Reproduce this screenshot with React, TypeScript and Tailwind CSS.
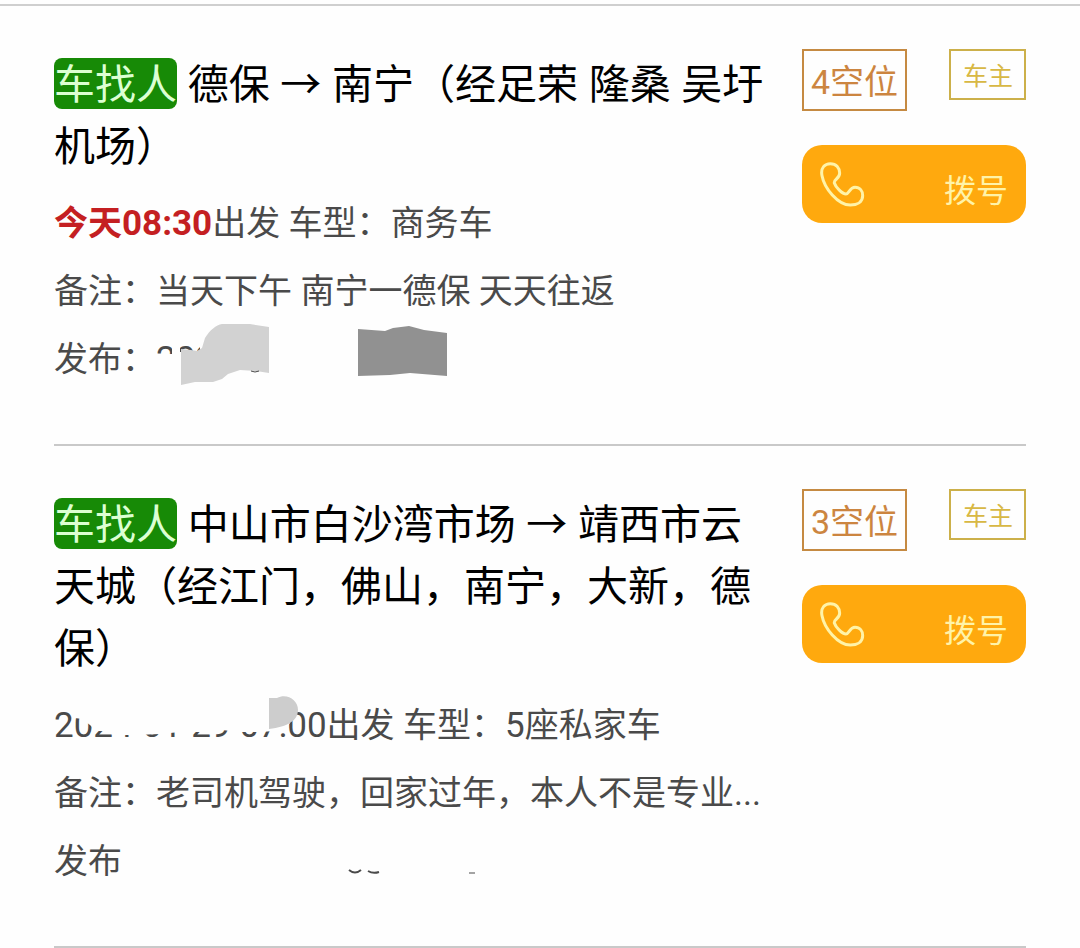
import type { ReactNode } from "react";

type Ride = {
  id: string;
  route: string;
  seats: number;
  departure: ReactNode;
  vehicle: ReactNode;
  note: string;
  publisher: ReactNode;
};

function PhoneIcon() {
  return (
    <svg
      viewBox="117 396 135 135"
      className="size-[45px] shrink-0"
      fill="none"
      stroke="currentColor"
      strokeWidth="9"
      strokeLinejoin="round"
      aria-hidden="true"
    >
      <path d="M123 437C118 413 132 401 148 401C166 401 176 414 176 429C176 447 158 447 160 459C164 472 184 492 195 492C204 492 206 472 222 472C237 472 245 483 245 497C245 516 228 525 208 525C170 525 130 474 123 437Z" />
    </svg>
  );
}

function PublisherMask() {
  return (
    <svg
      viewBox="150 320 310 70"
      className="absolute -top-[5px] left-24 h-[70px] w-[310px]"
      aria-hidden="true"
    >
      <path d="M150 354H172V345H180V352H200V340H460V390H150Z" fill="#fefefe" />
      <path
        d="M181 349L191 350L197 351L202 348L205 338C210 330 216 325 222 324H250L269 327V373L256 371L240 370L228 374L222 379L213 382L195 382L181 385Z"
        fill="#d2d2d2"
      />
      <path
        d="M358 329L385 331L393 328L409 326L424 330L447 333V376L410 373L390 375L358 376Z"
        fill="#919191"
      />
      <path d="M251 371Q255 373 259 371" fill="none" stroke="#4a4a4a" strokeWidth="1" />
    </svg>
  );
}

function DateMask() {
  return (
    <svg
      viewBox="50 690 290 60"
      className="absolute top-0 -left-1 h-[60px] w-[290px]"
      aria-hidden="true"
    >
      <path
        d="M75 690H290V722L284 729L262 731H240L222 729L208 731H180L160 733L136 734H116L112 730H96L90 724L82 718L75 717Z"
        fill="#fefefe"
      />
      <path d="M269 697L277 697C287 692 298 699 298 709C298 719 288 726 269 728Z" fill="#cdcdcd" />
    </svg>
  );
}

function Digits({ children }: { children: ReactNode }) {
  return <span className="text-[35px]">{children}</span>;
}

const rides: Ride[] = [
  {
    id: "debao-nanning",
    route: "德保 → 南宁（经足荣 隆桑 吴圩机场）",
    seats: 4,
    departure: (
      <strong className="font-bold text-[#c41f22]">
        今天<Digits>08:30</Digits>
      </strong>
    ),
    vehicle: "商务车",
    note: "当天下午 南宁一德保 天天往返",
    publisher: (
      <>
        发布：<Digits>202</Digits>
        <PublisherMask />
      </>
    ),
  },
  {
    id: "zhongshan-jingxi",
    route: "中山市白沙湾市场 → 靖西市云天城（经江门，佛山，南宁，大新，德保）",
    seats: 3,
    departure: (
      <>
        <Digits>2024-01-29 07:00</Digits>
        <DateMask />
      </>
    ),
    vehicle: (
      <>
        <Digits>5</Digits>座私家车
      </>
    ),
    note: "老司机驾驶，回家过年，本人不是专业...",
    publisher: (
      <>
        发布
        <svg
          viewBox="340 860 150 20"
          className="absolute top-[33px] left-[286px] h-5 w-[150px]"
          fill="none"
          stroke="#4a4a4a"
          strokeWidth="2"
          aria-hidden="true"
        >
          <path d="M349 870Q355 875 361 870M368 871Q373 874 379 872" />
          <path d="M469 873H475" strokeWidth="1" />
        </svg>
      </>
    ),
  },
];

function RideCard({ ride }: { ride: Ride }) {
  return (
    <article className="flex items-start gap-7 border-b-2 border-[#c9c9c9] pt-[46px] pb-[51px]">
      <div className="min-w-0 flex-1">
        <h2 className="font-['Noto_Sans','Noto_Sans_CJK_SC',sans-serif] text-[41px] leading-[62px] text-black">
          <span className="inline-block h-[51px] rounded-lg bg-[#178a06] leading-[51px] text-[#dcffd2]">
            车找人
          </span>{" "}
          {ride.route}
        </h2>
        <div className="mt-[13px] text-[34px] leading-[68px] text-[#4a4a4a]">
          <p className="relative h-[68px]">
            {ride.departure}出发 车型：{ride.vehicle}
          </p>
          <p>备注：{ride.note}</p>
          <p className="relative h-[68px]">{ride.publisher}</p>
        </div>
      </div>
      <div className="-mt-[3px] w-56 shrink-0">
        <div className="flex items-start justify-between">
          <span className="border-2 border-[#c58a42] px-[7px] pt-1 text-[34px] leading-[54px] text-[#cc8540]">
            {ride.seats}空位
          </span>
          <span className="border-2 border-[#ccb04a] pt-1 pr-[11px] pl-3 text-[25px] leading-[43px] text-[#d8b844]">
            车主
          </span>
        </div>
        <button
          type="button"
          className="mt-[34px] flex h-[78px] w-full items-center justify-between rounded-[20px] bg-[#ffa90e] px-[18px] text-[32px] text-[#fff3a8]"
        >
          <PhoneIcon />
          <span className="pt-3.5 leading-10">拨号</span>
        </button>
      </div>
    </article>
  );
}

export default function App() {
  return (
    <main
      className="min-h-screen bg-[#fefefe] pt-1 font-[Roboto,'Noto_Sans_CJK_SC',sans-serif]"
      lang="zh-CN"
    >
      <div className="border-t-2 border-[#cfcfcf] px-[54px]">
        {rides.map((ride) => (
          <RideCard key={ride.id} ride={ride} />
        ))}
      </div>
    </main>
  );
}
